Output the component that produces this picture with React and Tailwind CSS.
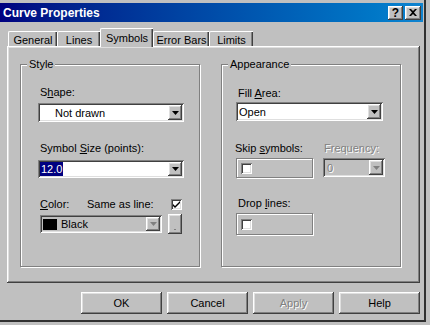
import React from "react";

const raised =
    "shadow-[inset_-1px_-1px_0_#404040,inset_1px_1px_0_#ffffff,inset_-2px_-2px_0_#808080,inset_2px_2px_0_#dfdfdf]";
const sunken =
    "shadow-[inset_1px_1px_0_#808080,inset_-1px_-1px_0_#ffffff,inset_2px_2px_0_#404040,inset_-2px_-2px_0_#dfdfdf]";
const etched = "border border-[#808080] shadow-[inset_1px_1px_0_#ffffff,1px_1px_0_#ffffff]";

function DownArrow({ disabled }) {
    return (
        <svg width="7" height="4" viewBox="0 0 7 4">
            <path d="M0 0h7L3.5 4z" fill={disabled ? "#808080" : "#000"} />
        </svg>
    );
}

function ArrowButton({ disabled }) {
    return (
        <div className={`w-[14px] h-full flex items-center justify-center bg-[#c0c0c0] ${raised}`}>
            <DownArrow disabled={disabled} />
        </div>
    );
}

function Select({ className, children, disabled, bg = "bg-white" }) {
    return (
        <div className={`flex p-[2px] ${bg} ${sunken} ${className}`}>
            <div className="flex-1 flex items-center overflow-hidden">{children}</div>
            <ArrowButton disabled={disabled} />
        </div>
    );
}

function Tab({ label, className, selected }) {
    if (selected) {
        return (
            <div
                className={`relative z-10 h-[19px] -mb-[1px] flex justify-center pt-[2px] bg-[#c0c0c0] border-t border-l border-white rounded-tl-[2px] shadow-[inset_-1px_0_0_#404040,inset_-2px_0_0_#808080] ${className}`}
            >
                {label}
            </div>
        );
    }
    return (
        <div
            className={`h-[15px] flex justify-center items-start pt-[1px] border-t border-l border-white rounded-tl-[2px] shadow-[inset_-1px_0_0_#404040,inset_-2px_0_0_#808080] ${className}`}
        >
            {label}
        </div>
    );
}

function Check({ checked }) {
    return (
        <div className={`w-[11px] h-[11px] bg-white flex items-center justify-center ${sunken}`}>
            {checked && (
                <svg width="7" height="7" viewBox="0 0 7 7">
                    <path d="M0 3l2 2 5-5v2L2 7 0 5z" fill="#000" />
                </svg>
            )}
        </div>
    );
}

function Group({ title, className, children }) {
    return (
        <div className={`relative w-[180px] h-[203px] ${etched} ${className}`}>
            <span className="absolute -top-[8px] left-[6px] px-[2px] leading-[14px] bg-[#c0c0c0]">{title}</span>
            {children}
        </div>
    );
}

function Button({ children, disabled }) {
    return (
        <div
            className={`w-[81px] h-[22px] flex items-center justify-center ${raised} ${
                disabled ? "text-[#808080] [text-shadow:1px_1px_0_#ffffff]" : ""
            }`}
        >
            {children}
        </div>
    );
}

export default function App() {
    return (
        <div className="w-[430px] h-[325px] bg-[#c0c0c0] text-black text-[11px] leading-[14px] font-['Liberation_Sans',Arial,sans-serif]">
            <div className="w-[426px] h-[322px] border-r-2 border-b-2 border-[#303030] flex flex-col pt-[3px]">
                {/* title bar */}
                <div className="h-[19px] mr-[1px] flex items-center justify-between pl-[3px] pr-[2px] bg-linear-to-r from-[#000080] to-[#1084d0]">
                    <span className="text-white font-bold text-[12px]">Curve Properties</span>
                    <div className="flex gap-[2px]">
                        <div className={`w-[15px] h-[14px] flex items-center justify-center bg-[#c0c0c0] font-bold text-[12px] leading-none ${raised}`}>
                            ?
                        </div>
                        <div className={`w-[16px] h-[14px] flex items-center justify-center bg-[#c0c0c0] ${raised}`}>
                            <svg width="8" height="7" viewBox="0 0 8 7">
                                <path d="M0 0h2l2 2 2-2h2L5 3.5 8 7H6L4 5 2 7H0l3-3.5z" fill="#000" />
                            </svg>
                        </div>
                    </div>
                </div>

                {/* tabs */}
                <div className="mt-[6px] ml-[8px] h-[18px] flex items-end">
                    <Tab label="General" className="w-[49px]" />
                    <Tab label="Lines" className="w-[43px]" />
                    <Tab label="Symbols" className="w-[53px]" selected />
                    <Tab label="Error Bars" className="w-[56px]" />
                    <Tab label="Limits" className="w-[44px]" />
                </div>

                {/* panel */}
                <div className={`ml-[7px] w-[413px] h-[237px] pt-[18px] pl-[13px] flex gap-[21px] ${raised}`}>
                    <Group title="Style">
                        <div className="flex flex-col px-[17px]">
                            <div className="mt-[20px] ml-[2px]">
                                S<u className="underline-offset-1">h</u>ape:
                            </div>
                            <Select className="mt-[4px] w-[146px] h-[19px]">
                                <span className="pl-[15px]">Not drawn</span>
                            </Select>
                            <div className="mt-[19px] ml-[2px]">
                                Symbol <u className="underline-offset-1">S</u>ize (points):
                            </div>
                            <Select className="mt-[5px] w-[146px] h-[18px]">
                                <span className="bg-[#000080] text-white px-[1px]">12.0</span>
                            </Select>
                            <div className="mt-[19px] ml-[2px] flex items-center">
                                <span className="w-[47px]">
                                    <u className="underline-offset-1">C</u>olor:
                                </span>
                                <span className="w-[84px]">Same as line:</span>
                                <Check checked />
                            </div>
                            <div className="mt-[3px] ml-[2px] flex items-center gap-[6px] h-[20px]">
                                <Select className="w-[124px] h-[18px]" bg="bg-[#c0c0c0]" disabled>
                                    <span className="w-[14px] h-[11px] bg-black ml-[1px]" />
                                    <span className="ml-[4px]">Black</span>
                                </Select>
                                <div className={`w-[14px] h-[20px] flex items-end justify-center pb-[4px] ${raised}`}>
                                    <span className="w-[2px] h-[1px] bg-[#808080]" />
                                </div>
                            </div>
                        </div>
                    </Group>

                    <Group title="Appearance">
                        <div className="flex flex-col">
                            <div className="mt-[21px] ml-[16px]">
                                Fill <u className="underline-offset-1">A</u>rea:
                            </div>
                            <Select className="mt-[2px] ml-[14px] w-[147px] h-[19px]">
                                <span className="pl-[1px]">Open</span>
                            </Select>
                            <div className="mt-[20px] flex">
                                <span className="ml-[13px] w-[89px]">
                                    Skip <u className="underline-offset-1">s</u>ymbols:
                                </span>
                                <span className="text-[#808080] [text-shadow:1px_1px_0_#ffffff]">Frequency:</span>
                            </div>
                            <div className="mt-[3px] flex items-start">
                                <div className={`ml-[14px] w-[77px] h-[20px] flex items-center pl-[4px] ${etched}`}>
                                    <Check />
                                </div>
                                <Select className="ml-[10px] w-[62px] h-[19px]" bg="bg-[#c0c0c0]" disabled>
                                    <span className="pl-[2px] text-[#808080] [text-shadow:1px_1px_0_#ffffff]">0</span>
                                </Select>
                            </div>
                            <div className="mt-[18px] ml-[16px]">
                                Drop <u className="underline-offset-1">l</u>ines:
                            </div>
                            <div className={`mt-[3px] ml-[14px] w-[77px] h-[22px] flex items-center pl-[4px] ${etched}`}>
                                <Check />
                            </div>
                        </div>
                    </Group>
                </div>

                {/* buttons */}
                <div className="mt-[9px] pl-[81px] flex gap-[5px]">
                    <Button>OK</Button>
                    <Button>Cancel</Button>
                    <Button disabled>Apply</Button>
                    <Button>Help</Button>
                </div>
            </div>
        </div>
    );
}
